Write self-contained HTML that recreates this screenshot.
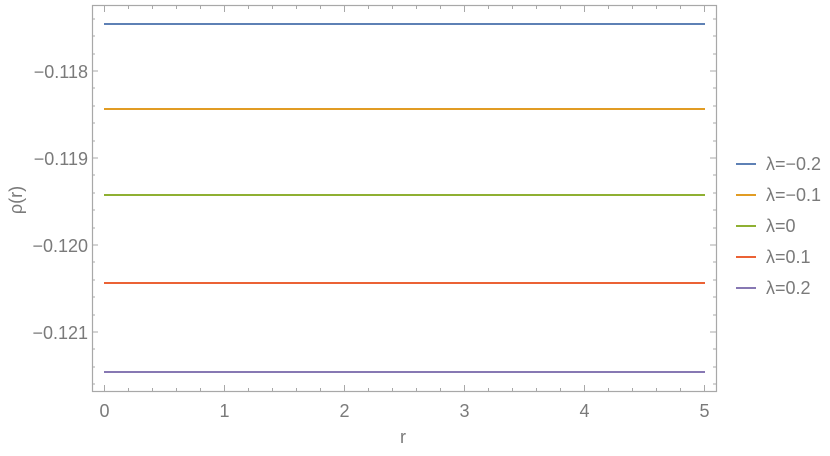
<!DOCTYPE html><html><head><style>body{margin:0;background:#fff}</style></head><body>
<svg width="830" height="451" xmlns="http://www.w3.org/2000/svg" font-family="Liberation Sans, sans-serif" fill="#7a7a7a">
<rect x="92.5" y="5.5" width="624" height="386" fill="none" stroke="#a8a8a8" stroke-width="1.2"/>
<g stroke="#a8a8a8" stroke-width="1">
<path d="M92 71h6M92 158h6M92 245h6M92 332h6"/>
<path d="M92 19h3M92 36h3M92 54h3M92 88h3M92 106h3M92 123h3M92 141h3M92 175h3M92 193h3M92 210h3M92 228h3M92 262h3M92 280h3M92 297h3M92 315h3M92 349h3M92 367h3M92 384h3"/>
<path d="M716 71h-6M716 158h-6M716 245h-6M716 332h-6"/>
<path d="M716 19h-3M716 36h-3M716 54h-3M716 88h-3M716 106h-3M716 123h-3M716 141h-3M716 175h-3M716 193h-3M716 210h-3M716 228h-3M716 262h-3M716 280h-3M716 297h-3M716 315h-3M716 349h-3M716 367h-3M716 384h-3"/>
<path d="M104.5 391v-6M224.5 391v-6M344.5 391v-6M464.5 391v-6M584.5 391v-6M704.5 391v-6"/>
<path d="M128.5 391v-3M152.5 391v-3M176.5 391v-3M200.5 391v-3M248.5 391v-3M272.5 391v-3M296.5 391v-3M320.5 391v-3M368.5 391v-3M392.5 391v-3M416.5 391v-3M440.5 391v-3M488.5 391v-3M512.5 391v-3M536.5 391v-3M560.5 391v-3M608.5 391v-3M632.5 391v-3M656.5 391v-3M680.5 391v-3"/>
<path d="M104.5 6v6M224.5 6v6M344.5 6v6M464.5 6v6M584.5 6v6M704.5 6v6"/>
<path d="M128.5 6v3M152.5 6v3M176.5 6v3M200.5 6v3M248.5 6v3M272.5 6v3M296.5 6v3M320.5 6v3M368.5 6v3M392.5 6v3M416.5 6v3M440.5 6v3M488.5 6v3M512.5 6v3M536.5 6v3M560.5 6v3M608.5 6v3M632.5 6v3M656.5 6v3M680.5 6v3"/>
</g>
<g stroke-width="2">
<path d="M104 24H705" stroke="#5e81b5"/>
<path d="M104 109H705" stroke="#e19c24"/>
<path d="M104 195H705" stroke="#8fb032"/>
<path d="M104 283H705" stroke="#eb6235"/>
<path d="M104 372H705" stroke="#8778b3"/>
</g>
<g font-size="18" text-anchor="end">
<text x="88" y="78">−0.118</text><text x="88" y="165">−0.119</text><text x="88" y="252">−0.120</text><text x="88" y="339">−0.121</text>
</g>
<g font-size="18" text-anchor="middle">
<text x="104.5" y="417">0</text><text x="224.5" y="417">1</text><text x="344.5" y="417">2</text><text x="464.5" y="417">3</text><text x="584.5" y="417">4</text><text x="704.5" y="417">5</text>
<text x="403" y="443">r</text>
</g>
<text x="0" y="0" font-size="18" text-anchor="middle" transform="translate(22 200) rotate(-90)">ρ(r)</text>
<g stroke-width="2">
<path d="M736 164h20" stroke="#5e81b5"/><path d="M736 195h20" stroke="#e19c24"/><path d="M736 226h20" stroke="#8fb032"/><path d="M736 257h20" stroke="#eb6235"/><path d="M736 288h20" stroke="#8778b3"/>
</g>
<g font-size="18">
<text x="766" y="170">λ=−0.2</text><text x="766" y="201">λ=−0.1</text><text x="766" y="232">λ=0</text><text x="766" y="263">λ=0.1</text><text x="766" y="294">λ=0.2</text>
</g>
</svg>
</body></html>
